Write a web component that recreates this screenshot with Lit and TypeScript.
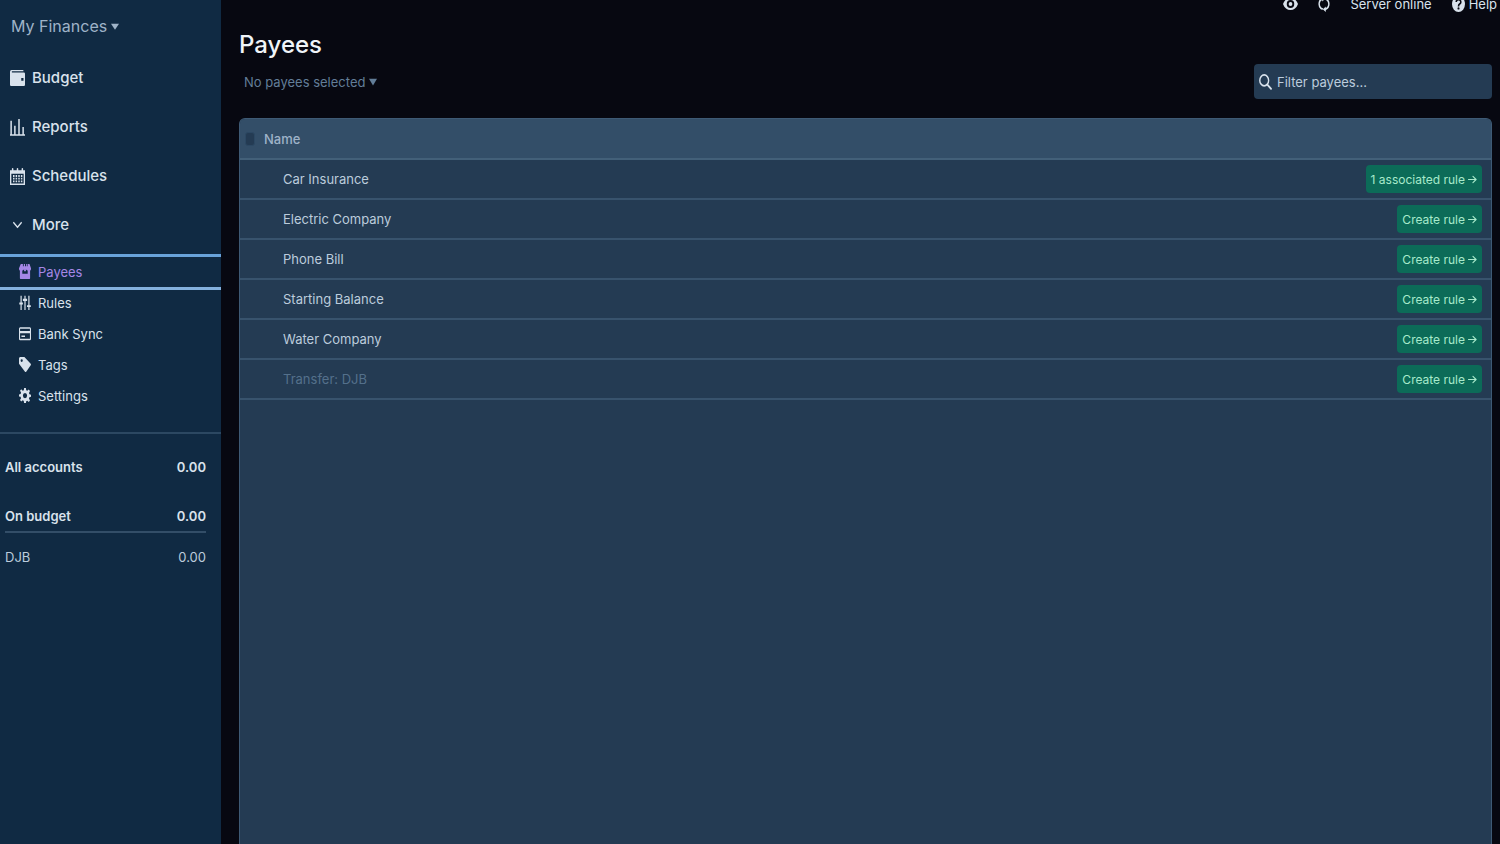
import { LitElement, html, css, svg } from "lit";
import { customElement, state } from "lit/decorators.js";

const icons = {
  wallet: svg`<path fill="currentColor" fill-rule="evenodd" d="M2 1h15a1 1 0 0 1 1 1v.6H2.500v1.200h16A1.500 1.500 0 0 1 20 5.300v12.200a1.500 1.500 0 0 1-1.500 1.500h-17A1.500 1.500 0 0 1 0 17.500V3a2 2 0 0 1 2-2zM15 10v3h3v-3z"/>`,
  reports: svg`<path fill="currentColor" d="M0 18h20v1.700H0zM0.500 3h2v16h-2zM5.500 8.500h2V19h-2zM11 1h2v18h-2zM16.500 10h2v9h-2z"/>`,
  calendar: svg`<path fill="currentColor" fill-rule="evenodd" d="M0 3.500h2.500V2a1 1 0 0 1 2 0v1.500h4.500V2a1 1 0 0 1 2 0v1.500h4.500V2a1 1 0 0 1 2 0v1.500H20V20H0zM1.800 7.500v10.900h16.400V7.500z"/><path fill="currentColor" d="M4 9h2v2H4zm3.500 0h2v2h-2zm3.500 0h2v2h-2zm3.500 0h2v2h-2zM4 12h2v2H4zm3.500 0h2v2h-2zm3.500 0h2v2h-2zm3.500 0h2v2h-2zM4 15h2v2H4zm3.500 0h2v2h-2zm3.500 0h2v2h-2zm3.500 0h2v2h-2z"/>`,
  chevron: svg`<path fill="none" stroke="currentColor" stroke-width="1.900" stroke-linecap="round" stroke-linejoin="round" d="M5 7.500 10 12.500l5-5"/>`,
  store: svg`<path fill="currentColor" fill-rule="evenodd" d="M3 0h3.500v3H8V0h2v3h2V0h2v3h1V0h2.500L20 5.500A3.500 3.500 0 0 1 18.500 9v10a1 1 0 0 1-1 1h-15a1 1 0 0 1-1-1V9A3.500 3.500 0 0 1 0 5.500zM5.500 8.500V13h9V8.500a3 3 0 0 1-3-1.500v2.500h-3V7a3 3 0 0 1-3 1.500z"/>`,
  sliders: svg`<path fill="currentColor" d="M2.500 1h2v9h2v2.500h-2V20h-2v-7.500h-2V10h2zM9 1h2v4h2.500v3H11v12H9V8H6.500V5H9zM15.500 1h2v12.500h2.200V16h-2.200v4h-2v-4h-2.200v-2.500h2.200z"/>`,
  card: svg`<path fill="currentColor" fill-rule="evenodd" d="M2 1.500h16a2 2 0 0 1 2 2v13.500a2 2 0 0 1-2 2H2a2 2 0 0 1-2-2V3.500a2 2 0 0 1 2-2zM1.800 3.500V6.500h16.400V3.500zM1.800 9.500V17h16.400V9.500zM4 12.500h6v2H4z"/>`,
  tag: svg`<path fill="currentColor" fill-rule="evenodd" d="M0 9V2a2 2 0 0 1 2-2h7l10.500 9a1.500 1.500 0 0 1 0 2L12 19.500a1.500 1.500 0 0 1-2 0zM4.500 6.500a1.800 1.800 0 1 0 0-3.600 1.800 1.800 0 0 0 0 3.600z"/>`,
  gear: svg`<path fill="currentColor" fill-rule="evenodd" d="M8.500 0h3l.5 3 1.800.8 2.500-1.800 2 2-1.700 2.500.8 1.900 2.600.5v2.800l-2.700.5-.7 1.900 1.700 2.500-2 2-2.500-1.700-1.800.8-.5 2.800h-3L8 17.200l-1.800-.8-2.500 1.700-2-2 1.700-2.500-.8-1.900L0 11.200V8.500L2.700 8l.7-1.900L1.700 3.700l2-2 2.500 1.800L8 3zM10 13.500a3.500 3.500 0 1 0 0-7 3.500 3.500 0 0 0 0 7z"/>`,
  search: svg`<circle cx="8" cy="8" r="6.800" fill="none" stroke="currentColor" stroke-width="2.200"/><path stroke="currentColor" stroke-width="2.600" stroke-linecap="round" d="m13 13.500 5.500 5"/>`,
  caret: svg`<path fill="currentColor" d="M0 2h20L10 19z"/>`,
  arrow: svg`<path fill="none" stroke="currentColor" stroke-width="2.400" stroke-linecap="round" stroke-linejoin="round" d="M1 10h17M11 3l7 7-7 7"/>`,
  eye: svg`<path fill="currentColor" fill-rule="evenodd" d="M0 10C2 5 5.500 2.500 10 2.500S18 5 20 10c-2 5-5.500 7.500-10 7.500S2 15 0 10zm10 5a5 5 0 1 0 0-10 5 5 0 0 0 0 10z"/><circle cx="10" cy="10" r="2.500" fill="currentColor"/>`,
  sync: svg`<path fill="none" stroke="currentColor" stroke-width="2.400" d="M9 3.500C1 4 0 12 5 15.500l3 1M11 16.500C19 16 20 8 15 4.500l-3-1"/><path fill="currentColor" d="m13 13-5 3.500 5 3.500zM7 0l5 3.500L7 7z"/>`,
  help: svg`<circle cx="10" cy="10" r="10" fill="currentColor"/><path fill="none" stroke="#0a0b14" stroke-width="2.400" d="M6.500 7.500a3.500 3 0 1 1 5 2.700Q10 11 10 13"/><circle cx="10" cy="15.500" r="1.500" fill="#0a0b14"/>`,
};

type IconName = keyof typeof icons;

const icon = (name: IconName, size = "") =>
  html`<svg class="icon ${size}" viewBox="0 0 20 20" preserveAspectRatio="none" aria-hidden="true">${icons[name]}</svg>`;

interface Payee {
  name: string;
  rules: number;
  transfer?: boolean;
}

@customElement("app-sidebar")
export class AppSidebar extends LitElement {
  static styles = css`
    :host {
      display: flex;
      flex-direction: column;
      background: #102a43;
      color: #d9e2ec;
      font-size: 15px;
    }
    * { box-sizing: border-box; }
    .icon { width: 15px; height: 18px; flex: none; }
    .icon.small { width: 12px; height: 15px; }
    .icon.tiny { width: 8px; height: 7px; }
    button { font: inherit; color: inherit; background: none; border: 0; padding: 0; cursor: pointer; }
    a { color: inherit; text-decoration: none; }
    .budget-name {
      display: flex;
      align-items: center;
      align-self: flex-start;
      gap: 4px;
      height: 52px;
      padding-left: 11px;
      font-size: 16px;
      color: #9fb3c8;
    }
    .primary, .secondary { display: flex; flex-direction: column; }
    .primary { padding-top: 1px; }
    .primary-item {
      display: flex;
      align-items: center;
      gap: 7px;
      height: 49px;
      padding-left: 10px;
      font-weight: 500;
      text-align: left;
    }
    .secondary { padding: 7px 0 21px; border-bottom: 2px solid #2c4862; font-size: 13px; }
    .secondary-item {
      display: flex;
      align-items: center;
      gap: 7px;
      height: 31px;
      padding-left: 19px;
    }
    .secondary-item.active {
      position: relative;
      color: #a587e6;
      box-shadow: 0 -2px 0 #69a3da, inset 0 1px 0 #69a3da, 0 3px 0 #84b1de;
    }
    .accounts { display: flex; flex-direction: column; padding: 13px 15px 0 5px; font-size: 13px; }
    .account {
      display: flex;
      align-items: center;
      justify-content: space-between;
      height: 40px;
      color: #bcccdc;
    }
    .account.total { font-weight: 600; color: #d9e2ec; }
    .account.group { height: 32px; margin-top: 14px; margin-bottom: 4px; border-bottom: 2px solid #334e68; }
  `;

  private primary: [IconName, string][] = [
    ["wallet", "Budget"],
    ["reports", "Reports"],
    ["calendar", "Schedules"],
  ];
  private secondary: [IconName, string][] = [
    ["store", "Payees"],
    ["sliders", "Rules"],
    ["card", "Bank Sync"],
    ["tag", "Tags"],
    ["gear", "Settings"],
  ];

  render() {
    return html`
      <button class="budget-name">My Finances ${icon("caret", "tiny")}</button>
      <nav class="primary">
        ${this.primary.map(([i, label]) => html`<a class="primary-item" href="#${label}">${icon(i)}${label}</a>`)}
        <button class="primary-item" aria-expanded="true">${icon("chevron")}More</button>
      </nav>
      <nav class="secondary">
        ${this.secondary.map(
          ([i, label]) =>
            html`<a class="secondary-item ${label === "Payees" ? "active" : ""}" href="#${label}">${icon(i, "small")}${label}</a>`,
        )}
      </nav>
      <div class="accounts">
        <a class="account total" href="#all"><span>All accounts</span><span>0.00</span></a>
        <a class="account total group" href="#onbudget"><span>On budget</span><span>0.00</span></a>
        <a class="account" href="#djb"><span>DJB</span><span>0.00</span></a>
      </div>
    `;
  }
}

@customElement("app-root")
export class AppRoot extends LitElement {
  static styles = css`
    :host {
      display: grid;
      grid-template-columns: 221px minmax(0, 1fr);
      height: 100vh;
      overflow: hidden;
      background: #070811;
      color: #d9e2ec;
      font-family: Inter, "Liberation Sans", sans-serif;
      font-size: 13px;
    }
    * { box-sizing: border-box; }
    .icon { width: 13px; height: 16px; flex: none; }
    .icon.wide { width: 15px; }
    .icon.narrow { width: 12px; }
    .icon.tiny { width: 8px; height: 8px; }
    .icon.arrow { width: 9px; height: 9px; }
    button { font: inherit; color: inherit; background: none; border: 0; padding: 0; cursor: pointer; }
    .main { display: flex; flex-direction: column; min-height: 0; padding: 0 8px 0 18px; }
    .status {
      display: flex;
      align-items: center;
      justify-content: flex-end;
      height: 20px;
      margin-top: -6px;
      margin-right: -5px;
    }
    .status button { display: flex; align-items: center; gap: 4px; }
    .status .view { margin-right: 20px; }
    .status .sync { margin-right: 20px; }
    .status .server { margin-right: 20px; }
    h1 { margin: 14px 0 0; font-size: 24px; line-height: 34px; font-weight: 500; color: #f0f4f8; }
    .toolbar { display: flex; align-items: center; justify-content: space-between; height: 35px; margin-top: 2px; }
    .selection { display: flex; align-items: center; gap: 4px; padding-left: 5px; color: #627d98; }
    .filter {
      display: flex;
      align-items: center;
      gap: 5px;
      width: 238px;
      height: 35px;
      padding: 0 5px;
      border-radius: 4px;
      background: #243b53;
    }
    .filter input {
      flex: 1;
      min-width: 0;
      padding: 0;
      border: 0;
      outline: 0;
      background: none;
      color: inherit;
      font: inherit;
    }
    .filter input::placeholder { color: #bcccdc; opacity: 1; }
    .panel {
      flex: 1;
      min-height: 0;
      margin-top: 19px;
      border: 1px solid #3e5a75;
      border-bottom: 0;
      border-radius: 6px 6px 0 0;
      background: #243b53;
      overflow: hidden;
    }
    table { width: 100%; border-collapse: collapse; }
    th, td { height: 40px; padding: 0; border-bottom: 2px solid #38536d; text-align: left; font-weight: 400; }
    th { background: #334e68; color: #9fb3c8; font-weight: 500; border-bottom-color: #436079; }
    .check { width: 24px; padding-left: 5px; }
    .check input {
      display: block;
      appearance: none;
      width: 10px;
      height: 14px;
      margin: 0;
      border: 1px solid #2c4863;
      border-radius: 3px;
      background: #243b53;
    }
    .name { padding-left: 19px; color: #bcccdc; }
    .name.transfer { color: #54708b; }
    .action { padding-right: 9px; text-align: right; }
    .rule {
      display: inline-flex;
      align-items: center;
      gap: 3px;
      height: 28px;
      padding: 0 5px;
      border-radius: 4px;
      background: #0c6b58;
      color: #a7eacb;
      font-size: 12px;
      vertical-align: middle;
    }
  `;

  @state() private filter = "";

  private payees: Payee[] = [
    { name: "Car Insurance", rules: 1 },
    { name: "Electric Company", rules: 0 },
    { name: "Phone Bill", rules: 0 },
    { name: "Starting Balance", rules: 0 },
    { name: "Water Company", rules: 0 },
    { name: "Transfer: DJB", rules: 0, transfer: true },
  ];

  private onFilter(e: Event) {
    this.filter = (e.target as HTMLInputElement).value;
  }

  render() {
    const shown = this.payees.filter((p) => p.name.toLowerCase().includes(this.filter.toLowerCase()));
    return html`
      <app-sidebar></app-sidebar>
      <main class="main">
        <div class="status">
          <button class="view" aria-label="Privacy mode">${icon("eye", "wide")}</button>
          <button class="sync" aria-label="Sync">${icon("sync", "narrow")}</button>
          <button class="server">Server online</button>
          <button>${icon("help")}Help</button>
        </div>
        <h1>Payees</h1>
        <div class="toolbar">
          <button class="selection">No payees selected ${icon("caret", "tiny")}</button>
          <label class="filter">
            ${icon("search")}
            <input type="text" aria-label="Filter payees" placeholder="Filter payees..." @input=${this.onFilter} />
          </label>
        </div>
        <div class="panel">
          <table>
            <thead>
              <tr>
                <th class="check"><input type="checkbox" aria-label="Select all" /></th>
                <th colspan="2">Name</th>
              </tr>
            </thead>
            <tbody>
              ${shown.map(
                (p) => html`<tr>
                  <td class="check"></td>
                  <td class="name ${p.transfer ? "transfer" : ""}">${p.name}</td>
                  <td class="action">
                    <button class="rule">${p.rules ? `${p.rules} associated rule` : "Create rule"}${icon("arrow", "arrow")}</button>
                  </td>
                </tr>`,
              )}
            </tbody>
          </table>
        </div>
      </main>
    `;
  }
}
